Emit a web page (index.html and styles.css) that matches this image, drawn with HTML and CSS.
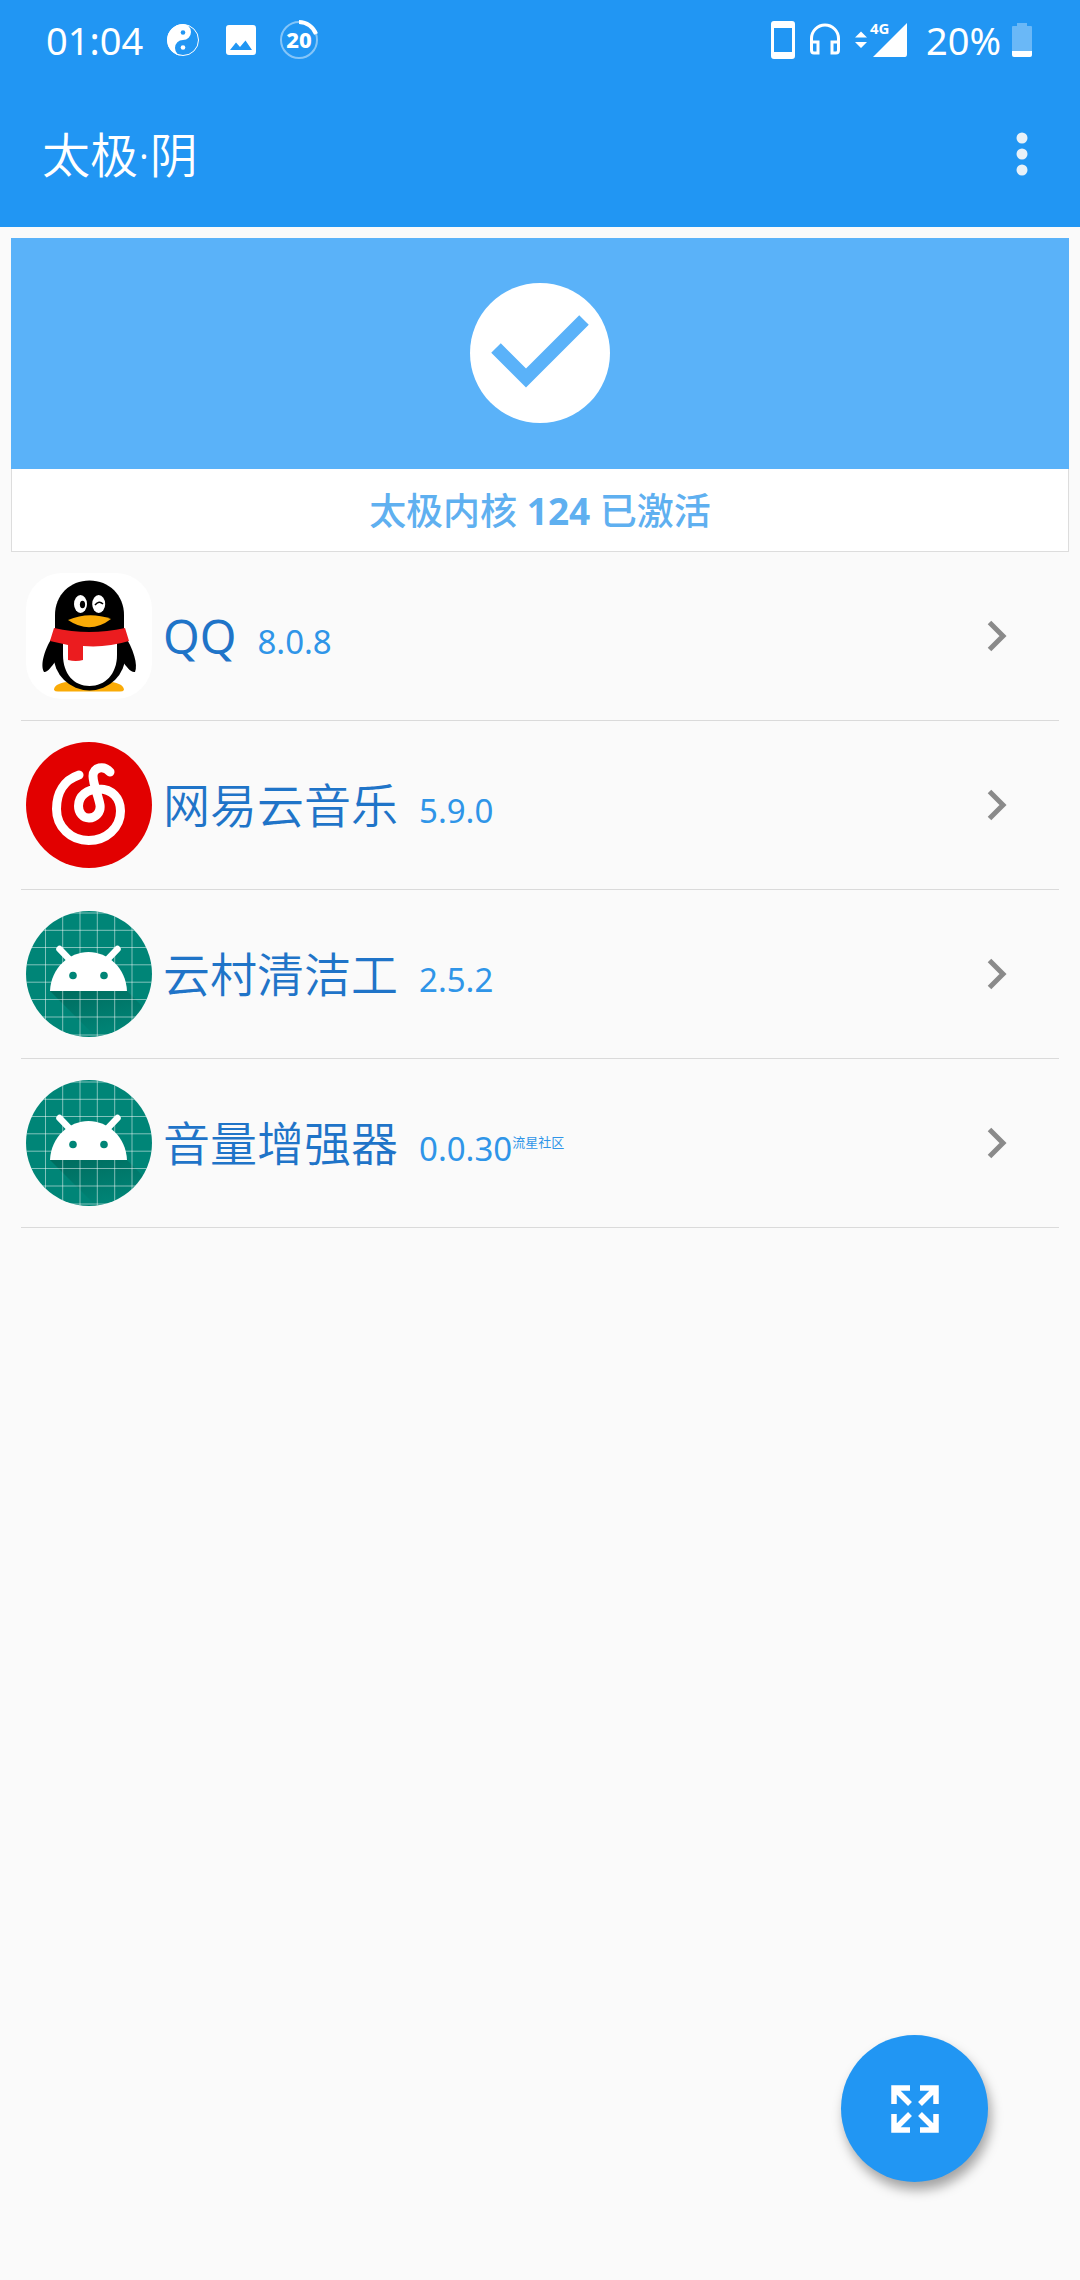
FILE: index.html
```html
<!DOCTYPE html>
<html lang="zh-CN">
<head>
<meta charset="utf-8">
<meta name="viewport" content="width=device-width, initial-scale=1">
<title>太极·阴</title>
<link rel="stylesheet" href="styles.css">
</head>
<body>
<svg class="defs" aria-hidden="true">
  <defs>
    <clipPath id="disc"><circle cx="63" cy="63" r="63"/></clipPath>
    <linearGradient id="shade" x1="0" y1="0" x2="0.5" y2="1">
      <stop offset="0" stop-color="#004d40" stop-opacity=".45"/>
      <stop offset="1" stop-color="#004d40" stop-opacity="0"/>
    </linearGradient>
    <symbol id="android" viewBox="0 0 126 126">
      <g clip-path="url(#disc)">
        <rect width="126" height="126" fill="#008577"/>
        <path d="M24 80H101L126 105V126H70Z" fill="url(#shade)"/>
        <path d="M19.500 0V126M36.700 0V126M54 0V126M71.300 0V126M88.700 0V126M106 0V126M0 2H126M0 19.300H126M0 36.500H126M0 53.800H126M0 71.200H126M0 88.500H126M0 106H126M0 124H126" stroke="#fff" stroke-opacity=".5" stroke-width="1"/>
      </g>
      <path d="M33.500 38L45 50M91.500 38L80 50" stroke="#fff" stroke-width="6.500" stroke-linecap="round"/>
      <path d="M24 80C25 57 43 41 62.500 41S100 57 101 80Z" fill="#fff"/>
      <circle cx="47" cy="64.500" r="3.800" fill="#008577"/><circle cx="78" cy="64.500" r="3.800" fill="#008577"/>
    </symbol>
    <symbol id="chevron" viewBox="0 0 20 32">
      <path d="M2.500 2.500L16 16L2.500 29.500" fill="none" stroke="#8a8a8a" stroke-width="5"/>
    </symbol>
  </defs>
</svg>

<header class="header">
  <div class="status">
    <div class="status-left">
      <span class="status-text">01:04</span>
      <div class="notices">
        <svg class="notice" viewBox="0 0 40 40"><circle cx="20" cy="20" r="15.500" fill="none" stroke="#fff"/><path d="M20 4A16 16 0 0 0 20 36A8 8 0 0 1 20 20A8 8 0 0 0 20 4Z" fill="#fff"/><circle cx="20" cy="12.500" r="2.300" fill="#2196f3"/><circle cx="20" cy="27.500" r="2.300" fill="#fff"/></svg>
        <svg class="notice" viewBox="0 0 40 40"><rect x="5" y="5" width="30" height="30" rx="3" fill="#fff"/><path d="M9 30L15 22.500L19 27L24.500 20.500L31 30Z" fill="#2196f3"/></svg>
        <svg class="notice" viewBox="0 0 40 40"><circle cx="20" cy="20" r="18" fill="none" stroke="#fff" stroke-opacity=".45" stroke-width="2"/><path d="M20 2A18 18 0 0 1 37 14" fill="none" stroke="#fff" stroke-width="4"/><text class="count" x="20" y="28" text-anchor="middle">20</text></svg>
      </div>
    </div>
    <div class="status-right">
      <div class="status-icons">
        <svg class="phone" viewBox="0 0 24 38"><path fill-rule="evenodd" d="M3 0H21Q24 0 24 3V35Q24 38 21 38H3Q0 38 0 35V3Q0 0 3 0ZM3 7V31H21V7Z" fill="#fff"/></svg>
        <svg class="headphones" viewBox="0 0 32 36"><path d="M2.500 25V16.500A13.500 13.500 0 0 1 29.500 16.500V25" fill="none" stroke="#fff" stroke-width="3"/><path d="M2.500 20H9V31H5Q2.500 31 2.500 28ZM29.500 20H23V31H27Q29.500 31 29.500 28Z" fill="none" stroke="#fff" stroke-width="3"/></svg>
        <svg class="network" viewBox="0 -6 54 48"><path d="M0 15.500L6 9.500L12 15.500ZM0 20H12L6 26ZM18 35L52 1V32Q52 35 50 35Z" fill="#fff"/><text class="network-type" x="15" y="12">4G</text></svg>
      </div>
      <span class="status-text">20%</span>
      <svg class="battery" viewBox="0 0 20 34"><path d="M0 4Q0 3 1 3H5V0H15V3H19Q20 3 20 4V28H0Z" fill="#fff" opacity=".33"/><path d="M0 28H20V32Q20 34 18 34H2Q0 34 0 32Z" fill="#fff"/></svg>
    </div>
  </div>
  <div class="appbar">
    <h1 class="title">太极·阴</h1>
    <button class="more" aria-label="更多选项"><svg viewBox="0 0 12 44"><circle cx="6" cy="6" r="5.500"/><circle cx="6" cy="22" r="5.500"/><circle cx="6" cy="38" r="5.500"/></svg></button>
  </div>
</header>

<main class="content">
  <section class="card">
    <div class="card-banner">
      <svg class="check" viewBox="0 0 140 140"><circle cx="70" cy="70" r="70" fill="#fff"/><path d="M26 65L56 95L114 37" fill="none" stroke="#5ab2f9" stroke-width="13.500"/></svg>
    </div>
    <p class="card-text">太极内核 <strong>124</strong> 已激活</p>
  </section>
  <ul class="apps">
    <li><a class="app" href="#qq">
      <svg class="app-icon" viewBox="0 0 126 126">
        <rect width="126" height="126" rx="36" fill="#fff"/>
        <path d="M28 117C28 111 38 108 50 109H76C88 108 98 111 98 117Q97 118.500 94 118.500H32Q29 118.500 28 117Z" fill="#faab07"/>
        <path d="M29 60C18 76 14 92 18 99C21 100 26 93 29 89L97 89C100 93 105 100 109 99C112 92 108 76 97 60Z"/>
        <ellipse cx="63.500" cy="82" rx="36" ry="35.500"/>
        <path d="M29 60V42C29 22 44 7.500 63.500 7.500S98 22 98 42V60Z"/>
        <path d="M37 68V82C37 101 48 113 63.500 113S91 101 91 82V68Z" fill="#fff"/>
        <path d="M28 55Q63 63 99 55L103 68Q80 75 57 73V87Q50 89 42 87V72L24 68Z" fill="#eb1c1f"/>
        <ellipse cx="54.500" cy="31" rx="6.500" ry="9" fill="#fff"/><ellipse cx="72.700" cy="31" rx="6.500" ry="9" fill="#fff"/>
        <ellipse cx="56.500" cy="31.500" rx="2.600" ry="3.800"/>
        <path d="M69 32Q73 27 77 31" fill="none" stroke="#000" stroke-width="1.500"/>
        <path d="M42 47Q63 38 85 46Q64 62 42 47Z" fill="#faab07"/>
      </svg>
      <span class="app-label"><span class="app-name latin">QQ</span><span class="app-version">8.0.8</span></span>
      <svg class="chevron"><use href="#chevron"/></svg>
    </a></li>
    <li><a class="app" href="#music">
      <svg class="app-icon" viewBox="0 0 126 126"><circle cx="63" cy="63" r="63" fill="#e20000"/><path d="M53 33C38 38 30.500 51 30.500 67C30.500 85 45 98.500 62.700 98.500C80 98.500 94.500 86 94.500 69C94.500 56 86 47 73 47C61 47 52.500 54 52.500 64C52.500 71 57 76 63 76C70 76 75 70 74 63C73 56 67 42 67 34C67 25 78 23 84 30" fill="none" stroke="#fff" stroke-width="9" stroke-linecap="round"/></svg>
      <span class="app-label"><span class="app-name">网易云音乐</span><span class="app-version">5.9.0</span></span>
      <svg class="chevron"><use href="#chevron"/></svg>
    </a></li>
    <li><a class="app" href="#cleaner">
      <svg class="app-icon"><use href="#android"/></svg>
      <span class="app-label"><span class="app-name">云村清洁工</span><span class="app-version">2.5.2</span></span>
      <svg class="chevron"><use href="#chevron"/></svg>
    </a></li>
    <li><a class="app" href="#volume">
      <svg class="app-icon"><use href="#android"/></svg>
      <span class="app-label"><span class="app-name">音量增强器</span><span class="app-version">0.0.30<sup>流星社区</sup></span></span>
      <svg class="chevron"><use href="#chevron"/></svg>
    </a></li>
  </ul>
</main>

<button class="fab" aria-label="展开"><svg viewBox="0 0 48 48"><path d="M19 3H3V19M29 3H45V19M19 45H3V29M29 45H45V29M3 3L19 19M45 3L29 19M3 45L19 29M45 45L29 29" fill="none" stroke="#fff" stroke-width="5.500"/></svg></button>
</body>
</html>
```

FILE: styles.css
```css
* {
  box-sizing: border-box;
}

body {
  margin: 0;
  min-height: 100vh;
  background: #fafafa;
  font-family: "Noto Sans", "Noto Sans CJK SC", sans-serif;
}

svg {
  display: block;
}

button {
  padding: 0;
  border: 0;
  background: none;
}

.defs {
  position: absolute;
  width: 0;
  height: 0;
}

.header {
  background: #2196f3;
  color: #fff;
}

.status {
  display: flex;
  justify-content: space-between;
  align-items: center;
  height: 80px;
  padding: 0 48px 0 46px;
}

.status-left,
.status-right,
.status-icons,
.notices {
  display: flex;
  align-items: center;
}

.status-left {
  gap: 20px;
}

.notices {
  gap: 18px;
}

.status-right {
  gap: 11px;
}

.status-icons {
  gap: 14px;
  margin-right: 6px;
}

.status-text {
  font-size: 38px;
  font-weight: 400;
  line-height: 52px;
}

.notice {
  width: 40px;
  height: 40px;
}

.count {
  font-size: 22px;
  font-weight: 800;
  fill: #fff;
}

.phone {
  width: 24px;
  height: 38px;
}

.headphones {
  width: 32px;
  height: 36px;
}

.network {
  width: 54px;
  height: 48px;
}

.network-type {
  font-size: 15px;
  font-weight: 700;
  fill: #fff;
}

.battery {
  width: 20px;
  height: 34px;
}

.appbar {
  display: flex;
  justify-content: space-between;
  align-items: center;
  height: 147px;
  padding: 0 42px;
}

.title {
  margin: 0;
  padding-top: 2px;
  font-size: 48px;
  font-weight: 350;
  line-height: 64px;
}

.more {
  padding: 0 10px;
}

.more svg {
  width: 12px;
  height: 44px;
  fill: #e8f1f8;
}

.content {
  padding: 11px;
}

.card {
  border: 1px solid #ddd;
  border-top: 0;
  background: #fff;
}

.card-banner {
  display: flex;
  justify-content: center;
  margin: 0 -1px;
  padding: 45px 0 46px;
  background: #5ab2f9;
}

.check {
  width: 140px;
  height: 140px;
}

.card-text {
  margin: 0;
  padding: 16px 0 14px;
  color: #5fb0f0;
  font-size: 37px;
  font-weight: 500;
  line-height: 52px;
  text-align: center;
}

.card-text strong {
  font-weight: 700;
}

.apps {
  margin: 0;
  padding: 0 10px;
  list-style: none;
}

.app {
  display: flex;
  align-items: center;
  gap: 11px;
  padding: 21px 52px 21px 5px;
  border-bottom: 1px solid #dadada;
  text-decoration: none;
}

.app-icon {
  width: 126px;
  height: 126px;
}

.app-label {
  display: flex;
  flex: 1;
  align-items: baseline;
  gap: 21px;
  padding-top: 6px;
  line-height: 64px;
}

.app-name {
  color: #1f74c8;
  font-size: 47px;
  font-weight: 350;
}

.latin {
  font-weight: 400;
}

.app-version {
  color: #2f95e8;
  font-size: 33px;
  font-weight: 400;
}

.app-version sup {
  font-size: 13px;
  line-height: 1;
  vertical-align: 14px;
}

.chevron {
  width: 20px;
  height: 32px;
}

.fab {
  position: fixed;
  right: 92px;
  bottom: 98px;
  display: grid;
  place-items: center;
  width: 147px;
  height: 147px;
  border-radius: 50%;
  background: #2196f3;
  box-shadow: 3px 8px 12px rgba(0, 0, 0, .35);
}

.fab svg {
  width: 48px;
  height: 48px;
}
```
